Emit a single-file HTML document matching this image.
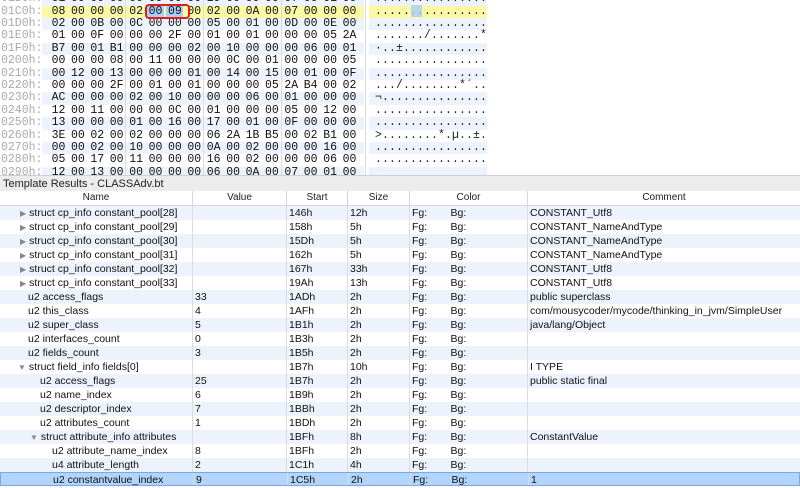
<!DOCTYPE html>
<html><head><meta charset="utf-8"><style>
*{margin:0;padding:0;box-sizing:border-box}
body{width:800px;height:488px;overflow:hidden;background:#fff;font-family:"Liberation Sans",sans-serif;position:relative}
#hex{position:absolute;left:0;top:0;width:800px;height:175px;overflow:hidden;background:#fff}
.hr{position:absolute;left:0;height:12.4px;width:800px;font-family:"Liberation Mono",monospace;font-size:11.5px;line-height:12.4px;color:#111}
.hr .off{position:absolute;left:1px;color:#aaa}
.hr .bg1{position:absolute;left:42px;width:322px;height:12.4px}
.hr .bg2{position:absolute;left:369px;width:118px;height:12.4px}
.hr .b{position:absolute;width:17px;text-align:center}
.hr .asc{position:absolute;left:375px;letter-spacing:0.1px;color:#222}
.blue .bg1,.blue .bg2{background:#edf3fc}
.yel .bg1,.yel .bg2{background:#fbf8a6}
.vs{position:absolute;top:0;height:175px;width:1px;background:#dcdcdc}
#title{position:absolute;left:0;top:175px;width:800px;height:16px;background:#ececec;font-size:11px;line-height:16px;padding-left:3px;color:#222;border-top:1px solid #d0d0d0}
#hdr{position:absolute;left:0;top:191px;width:800px;height:15px;background:#fff;border-bottom:1px solid #d6d6d6;font-size:10px;line-height:14px;color:#222}
#hdr div,.r div{position:absolute;top:0;height:100%}
#hdr div{text-align:center;border-right:1px solid #d6d6d6}
.r{position:absolute;left:0;width:800px;height:14px;font-size:10.5px;line-height:14px;color:#111}
.r div{padding-left:2px;border-right:1px solid #dcdcdc;white-space:nowrap}
.r.a{background:#edf3fc}
.r.sel{background:#b4d5fb;border:1px solid #7aa8e0}
.c0{left:0;width:193px}.c1{left:193px;width:94px}.c2{left:287px;width:61px}.c3{left:348px;width:62px}.c4{left:410px;width:118px}.c5{left:528px;width:272px}
.tri{color:#888;font-size:8px;margin-right:3px}
</style></head><body>
<div id="hex"></div>
<script>
var rows=[
["01B0h","01 00 00 00 00 00 00 00 19 00 00 00 07 00 01 00","................"],
["01C0h","08 00 00 00 02 00 09 00 02 00 0A 00 07 00 00 00","................"],
["01D0h","02 00 0B 00 0C 00 00 00 05 00 01 00 0D 00 0E 00","................"],
["01E0h","01 00 0F 00 00 00 2F 00 01 00 01 00 00 00 05 2A","......./.......*"],
["01F0h","B7 00 01 B1 00 00 00 02 00 10 00 00 00 06 00 01","·..±............"],
["0200h","00 00 00 08 00 11 00 00 00 0C 00 01 00 00 00 05","................"],
["0210h","00 12 00 13 00 00 00 01 00 14 00 15 00 01 00 0F","................"],
["0220h","00 00 00 2F 00 01 00 01 00 00 00 05 2A B4 00 02",".../........*´.."],
["0230h","AC 00 00 00 02 00 10 00 00 00 06 00 01 00 00 00","¬..............."],
["0240h","12 00 11 00 00 00 0C 00 01 00 00 00 05 00 12 00","................"],
["0250h","13 00 00 00 01 00 16 00 17 00 01 00 0F 00 00 00","................"],
["0260h","3E 00 02 00 02 00 00 00 06 2A 1B B5 00 02 B1 00",">........*.µ..±."],
["0270h","00 00 02 00 10 00 00 00 0A 00 02 00 00 00 16 00","................"],
["0280h","05 00 17 00 11 00 00 00 16 00 02 00 00 00 06 00","................"],
["0290h","12 00 13 00 00 00 00 00 06 00 0A 00 07 00 01 00",""]];
var h='';
rows.forEach(function(r,i){
 var cls=i==1?'yel':(i%2==0?'blue':'');
 h+='<div class="hr '+cls+'" style="top:'+(-6.8+i*12.4)+'px"><div class="bg1"></div><div class="bg2"></div><span class="off">'+r[0]+':</span>';
 r[1].split(' ').forEach(function(b,j){
  var st='left:'+(50+j*19.4)+'px;';
  if(i==1&&(j==5||j==6))st+='background:#a9cdf7;';
  h+='<span class="b" style="'+st+'">'+b+'</span>';});
 h+='<span class="asc">'+r[2]+'</span></div>';});
h+='<div class="vs" style="left:125px"></div><div class="vs" style="left:203px"></div><div class="vs" style="left:281px"></div><div class="vs" style="left:365px"></div>';
h+='<div style="position:absolute;left:411px;top:5px;width:11px;height:12px;background:#a9cdf7;opacity:.8"></div>';
h+='<div style="position:absolute;left:145px;top:4px;width:45px;height:15px;border:2px solid #e0201e;border-radius:4px"></div>';
document.getElementById('hex').innerHTML=h;
</script>
<div id="title">Template Results - CLASSAdv.bt</div>
<div id="hdr"><div class="c0">Name</div><div class="c1">Value</div><div class="c2">Start</div><div class="c3">Size</div><div class="c4">Color</div><div class="c5" style="border:none">Comment</div></div>
<div id="tbl"></div>
<script>
var T=[
[20,1,"struct cp_info constant_pool[28]","","146h","12h","CONSTANT_Utf8"],
[20,1,"struct cp_info constant_pool[29]","","158h","5h","CONSTANT_NameAndType"],
[20,1,"struct cp_info constant_pool[30]","","15Dh","5h","CONSTANT_NameAndType"],
[20,1,"struct cp_info constant_pool[31]","","162h","5h","CONSTANT_NameAndType"],
[20,1,"struct cp_info constant_pool[32]","","167h","33h","CONSTANT_Utf8"],
[20,1,"struct cp_info constant_pool[33]","","19Ah","13h","CONSTANT_Utf8"],
[28,0,"u2 access_flags","33","1ADh","2h","public superclass"],
[28,0,"u2 this_class","4","1AFh","2h","com/mousycoder/mycode/thinking_in_jvm/SimpleUser"],
[28,0,"u2 super_class","5","1B1h","2h","java/lang/Object"],
[28,0,"u2 interfaces_count","0","1B3h","2h",""],
[28,0,"u2 fields_count","3","1B5h","2h",""],
[18,2,"struct field_info fields[0]","","1B7h","10h","I TYPE"],
[40,0,"u2 access_flags","25","1B7h","2h","public static final"],
[40,0,"u2 name_index","6","1B9h","2h",""],
[40,0,"u2 descriptor_index","7","1BBh","2h",""],
[40,0,"u2 attributes_count","1","1BDh","2h",""],
[30,2,"struct attribute_info attributes","","1BFh","8h","ConstantValue"],
[52,0,"u2 attribute_name_index","8","1BFh","2h",""],
[52,0,"u4 attribute_length","2","1C1h","4h",""],
[52,0,"u2 constantvalue_index","9","1C5h","2h","1"]];
var s='';
T.forEach(function(r,i){
 var cls=i==19?'sel':(i%2==0?'a':'');
 var ic=r[1]==1?'<span class="tri">&#9654;</span>':(r[1]==2?'<span class="tri">&#9660;</span>':'');
 s+='<div class="r '+cls+'" style="top:'+(206+i*14)+'px"><div class="c0" style="padding-left:'+r[0]+'px">'+ic+r[2]+'</div><div class="c1">'+r[3]+'</div><div class="c2">'+r[4]+'</div><div class="c3">'+r[5]+'</div><div class="c4">Fg:&nbsp;&nbsp;&nbsp;&nbsp;&nbsp;&nbsp;&nbsp;&nbsp;Bg:</div><div class="c5" style="border:none">'+r[6]+'</div></div>';});
document.getElementById('tbl').innerHTML=s;
</script>
</body></html>
